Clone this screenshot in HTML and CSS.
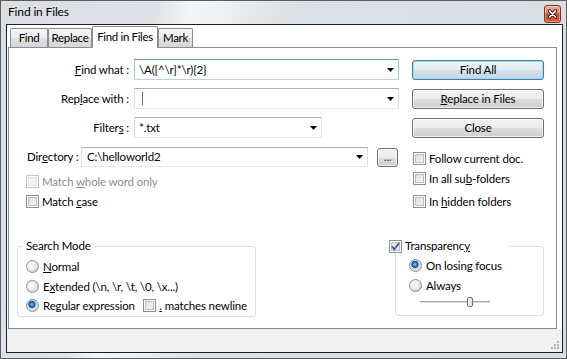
FILE: index.html
```html
<!DOCTYPE html>
<html lang="en">
<head>
    <meta charset="UTF-8">
    <title>Find in Files</title>
    <link rel="stylesheet" href="styles.css">
</head>
<body>
<div class="window">
    <div class="titlebar">
        <span class="title">Find in Files</span>
        <span class="close-btn">
            <svg width="15" height="16" viewBox="0 0 15 16">
                <path d="M4.5 5L10.5 11M10.5 5L4.5 11" stroke="#4a1b10" stroke-width="3.4" stroke-linecap="round"/>
                <path d="M4.5 5L10.5 11M10.5 5L4.5 11" stroke="#fff" stroke-width="1.6" stroke-linecap="round"/>
            </svg>
        </span>
    </div>

    <div class="client">
        <div class="tabs">
            <div class="tab t-find">Find</div>
            <div class="tab t-replace">Replace</div>
            <div class="tab active t-files">Find in Files</div>
            <div class="tab t-mark">Mark</div>
        </div>

        <div class="panel">
            <div class="top">
                <div class="fields">
                    <div class="row">
                        <span class="lbl"><u>F</u>ind what :</span>
                        <div class="combo hot w-main">
                            <span class="val">\A([^\r]*\r){2}</span>
                            <svg class="arrow" width="7" height="4"><path d="M0 0h7L3.5 4z" fill="#000"/></svg>
                        </div>
                    </div>
                    <div class="row">
                        <span class="lbl">Rep<u>l</u>ace with :</span>
                        <div class="combo w-main">
                            <span class="caret"></span>
                            <svg class="arrow" width="7" height="4"><path d="M0 0h7L3.5 4z" fill="#000"/></svg>
                        </div>
                    </div>
                    <div class="row">
                        <span class="lbl">Filter<u>s</u> :</span>
                        <div class="combo w-filter">
                            <span class="val">*.txt</span>
                            <svg class="arrow" width="7" height="4"><path d="M0 0h7L3.5 4z" fill="#000"/></svg>
                        </div>
                    </div>
                    <div class="row dir-row">
                        <span class="dir-lbl">Dir<u>e</u>ctory :</span>
                        <div class="combo w-dir">
                            <span class="val">C:\helloworld2</span>
                            <svg class="arrow" width="7" height="4"><path d="M0 0h7L3.5 4z" fill="#000"/></svg>
                        </div>
                        <div class="btn browse">...</div>
                    </div>
                    <div class="check disabled c-whole"><span class="box"></span><span>Match <u>w</u>hole word only</span></div>
                    <div class="check c-case"><span class="box"></span><span>Match <u>c</u>ase</span></div>
                </div>

                <div class="side">
                    <div class="btn default">Find All</div>
                    <div class="btn"><u>R</u>eplace in Files</div>
                    <div class="btn">Close</div>
                    <div class="check c-follow"><span class="box"></span><span>Follow current doc.</span></div>
                    <div class="check c-sub"><span class="box"></span><span>In all su<u>b</u>-folders</span></div>
                    <div class="check c-hidden"><span class="box"></span><span>In <u>h</u>idden folders</span></div>
                </div>
            </div>

            <div class="groups">
                <fieldset class="group mode">
                    <legend>Search Mode</legend>
                    <div class="opts">
                        <div class="opt o1"><span class="radio"></span><span><u>N</u>ormal</span></div>
                        <div class="opt o2"><span class="radio"></span><span>E<u>x</u>tended (\n, \r, \t, \0, \x...)</span></div>
                        <div class="opt o3">
                            <span class="regex"><span class="radio on"></span><span>Re<u>g</u>ular expression</span></span>
                            <span class="check"><span class="box"></span><span><u>.</u> matches newline</span></span>
                        </div>
                    </div>
                </fieldset>

                <fieldset class="group transp">
                    <legend>
                        <span class="box checked">
                            <svg width="11" height="11" viewBox="0 0 11 11"><path d="M2 5.5L4.3 8.3L9 2.2" fill="none" stroke="#2f57a8" stroke-width="1.8"/></svg>
                        </span>
                        <span>Transparenc<u>y</u></span>
                    </legend>
                    <div class="opts">
                        <div class="opt t1"><span class="radio on"></span><span>On losing focus</span></div>
                        <div class="opt t2"><span class="radio"></span><span>Always</span></div>
                        <div class="slider"><span class="thumb"></span></div>
                    </div>
                </fieldset>
            </div>
        </div>

        <div class="status">
            <svg class="grip" width="10" height="10" viewBox="0 0 10 10">
                <g fill="#b5b5b5">
                    <rect x="7" y="1" width="2" height="2"/>
                    <rect x="4" y="4" width="2" height="2"/>
                    <rect x="7" y="4" width="2" height="2"/>
                    <rect x="1" y="7" width="2" height="2"/>
                    <rect x="4" y="7" width="2" height="2"/>
                    <rect x="7" y="7" width="2" height="2"/>
                </g>
            </svg>
        </div>
    </div>
</div>
</body>
</html>
```

FILE: styles.css
```css
* {
    box-sizing: border-box;
}
body {
    margin: 0;
    font-family: Lato, "Liberation Sans", sans-serif;
    font-size: 11.5px;
    letter-spacing: -0.15px;
    color: #000;
    background: #fff;
}
.window {
    width: 567px;
    height: 359px;
    border: 1px solid #5a5e63;
    padding: 0 3px 5px 5px;
    display: flex;
    flex-direction: column;
    background: linear-gradient(105deg, #d9dee3 0%, #dfe3e7 24%, #f3f5f6 29%, #eef0f2 34%, #dce1e5 44%, #d8dde2 100%);
}

/* title bar */
.titlebar {
    height: 23px;
    flex: none;
    display: flex;
    align-items: flex-start;
    justify-content: space-between;
}
.title {
    padding: 4px 0 0 2px;
    line-height: 14px;
    font-size: 12px;
}
.close-btn {
    width: 17px;
    height: 18px;
    margin: 4px 2px 0 0;
    border: 1px solid #7a3325;
    border-radius: 3px;
    background: linear-gradient(#eab0a0 0%, #dc8068 45%, #c8492b 50%, #d9613f 100%);
    box-shadow: inset 0 0 0 1px rgba(255, 255, 255, 0.35);
    display: flex;
}

/* client area */
.client {
    flex: 1;
    border: 1px solid #1e1e1e;
    background: #fff;
    display: flex;
    flex-direction: column;
}
.tabs {
    height: 22px;
    flex: none;
    display: flex;
    align-items: flex-end;
    padding-left: 3px;
    position: relative;
    z-index: 1;
}
.tab {
    height: 19px;
    border: 1px solid #898c95;
    border-bottom: none;
    border-radius: 2px 2px 0 0;
    background: linear-gradient(#f6f6f6 0%, #ececec 50%, #e0e0e0 51%, #d6d6d6 100%);
    line-height: 18px;
    text-align: center;
    white-space: nowrap;
    letter-spacing: -0.35px;
}
.t-find { width: 38px; }
.t-replace { width: 44px; }
.t-files { width: 66px; }
.t-mark { width: 35px; }
.tab.active {
    height: 22px;
    margin-bottom: -1px;
    background: #fff;
    line-height: 19px;
}

.panel {
    height: 282px;
    flex: none;
    margin: 0 5px 0 1px;
    border: 1px solid #898c95;
    background: #fff;
}
.status {
    flex: 1;
    background: #f0f0f0;
    display: flex;
    justify-content: flex-end;
    align-items: flex-end;
}
.grip {
    margin: 0 2px 2px 0;
}

/* top part */
.top {
    display: flex;
}
.fields {
    width: 390px;
    padding-top: 11px;
    display: flex;
    flex-direction: column;
}
.side {
    width: 132px;
    margin-left: 13px;
    padding-top: 12px;
    display: flex;
    flex-direction: column;
}
.row {
    display: flex;
    align-items: center;
    height: 21px;
}
.row + .row {
    margin-top: 8px;
}
.row.dir-row {
    height: 20px;
    margin-top: 9px;
    padding-left: 18px;
}
.lbl {
    width: 120px;
    margin-right: 5px;
    text-align: right;
    line-height: 14px;
    white-space: nowrap;
}
.dir-lbl {
    width: 54px;
    line-height: 14px;
    white-space: nowrap;
}
.combo {
    height: 100%;
    border: 1px solid;
    border-color: #abadb3 #dbdfe6 #e3e9ef;
    display: flex;
    align-items: center;
    padding-left: 4px;
    line-height: 14px;
    white-space: nowrap;
}
.combo.hot {
    border-color: #5f90c2 #a7c6e4 #b9d3ec;
}
.w-main { width: 265px; }
.w-filter { width: 188px; }
.w-dir { width: 287px; padding-left: 5px; }
.arrow {
    margin-left: auto;
    margin-right: 4px;
    flex: none;
}
.caret {
    width: 1px;
    height: 13px;
    margin-left: 3px;
    background: #8a6636;
}

/* buttons */
.btn {
    height: 20px;
    border: 1px solid #707070;
    border-radius: 3px;
    background: linear-gradient(#f2f2f2 0%, #ebebeb 50%, #dddddd 51%, #cfcfcf 100%);
    box-shadow: inset 0 0 0 1px rgba(255, 255, 255, 0.7);
    text-align: center;
    line-height: 18px;
}
.side .btn + .btn {
    margin-top: 9px;
}
.btn.default {
    border-color: #3c7fb1;
    background: linear-gradient(#eef4f8 0%, #e4edf3 50%, #d4e1ea 51%, #c6d6e2 100%);
    box-shadow: inset 0 0 0 1px #a9d6f1;
}
.btn.browse {
    width: 21px;
    height: 19px;
    margin-left: 9px;
    line-height: 16px;
    color: #3a2a5a;
}

/* checkboxes and radios */
.check,
.opt {
    display: flex;
    align-items: center;
    height: 13px;
    line-height: 13px;
    white-space: nowrap;
}
.check {
    gap: 3px;
}
.opt {
    gap: 4px;
}
.box {
    width: 13px;
    height: 13px;
    flex: none;
    border: 1px solid #8f8f8f;
    background: linear-gradient(135deg, #d4d7db 0%, #eceef0 60%, #fafafa 100%);
    box-shadow: inset 0 0 0 1px #fff, inset 0 0 0 2px #b9bdc2;
    display: flex;
    align-items: center;
    justify-content: center;
}
.box.checked {
    background: linear-gradient(135deg, #dfe3e8 0%, #f4f5f7 100%);
}
.check.disabled {
    color: #8d8d8d;
}
.check.disabled .box {
    border-color: #c7c7c7;
    background: #f4f4f4;
    box-shadow: inset 0 0 0 1px #fff, inset 0 0 0 2px #e3e3e3;
}
.c-whole { margin: 8px 0 0 17px; }
.c-case { margin: 7px 0 0 17px; }
.c-follow { margin: 14px 0 0 1px; }
.c-sub { margin: 7px 0 0 1px; }
.c-hidden { margin: 10px 0 0 1px; }

.radio {
    width: 13px;
    height: 13px;
    flex: none;
    border: 1px solid #8e8f8f;
    border-radius: 50%;
    background: radial-gradient(circle at 40% 40%, #ffffff 0%, #f0f0f0 40%, #cfcfcf 75%, #e8e8e8 100%);
}
.radio.on {
    background: radial-gradient(circle at 45% 40%, #8fd3f7 0, #2a86d0 1.6px, #0f4f99 3.2px, #d2d2d2 3.9px, #eeeeee 100%);
}

/* group boxes */
.groups {
    margin-top: 31px;
    display: flex;
    align-items: flex-start;
}
.group {
    margin: 0;
    min-width: 0;
    border: 1px solid #d5dfe5;
    border-radius: 3px;
}
.group legend {
    line-height: 14px;
    height: 14px;
    padding: 0 3px;
    margin-left: -3px;
}
.mode {
    width: 239px;
    height: 78px;
    margin-left: 8px;
    padding: 0 8px;
}
.transp {
    width: 149px;
    height: 77px;
    margin-left: 139px;
    padding: 0 0 0 13px;
}
.transp legend {
    width: 119px;
    margin-left: -20px;
    padding: 0;
    background: #fff;
    display: flex;
    align-items: center;
    gap: 3px;
}
.opts {
    display: flex;
    flex-direction: column;
}
.mode .opts { padding-top: 7px; }
.o2 { margin-top: 7px; }
.o3 { margin-top: 6px; }
.regex {
    width: 122px;
    display: flex;
    align-items: center;
    gap: 4px;
}
.transp .opts { padding-top: 6px; }
.t2 { margin-top: 7px; }
.slider {
    width: 70px;
    height: 11px;
    margin: 4px 0 0 11px;
    display: flex;
    background: linear-gradient(transparent 5px, #a3a3a3 5px, #a3a3a3 6px, #e2e2e2 6px, #e2e2e2 7px, transparent 7px);
}
.thumb {
    width: 6px;
    height: 10px;
    margin: 1px 0 0 47px;
    border: 1px solid #6f6f6f;
    border-radius: 2px;
    background: linear-gradient(90deg, #f7f7f7, #dedede);
}
```
